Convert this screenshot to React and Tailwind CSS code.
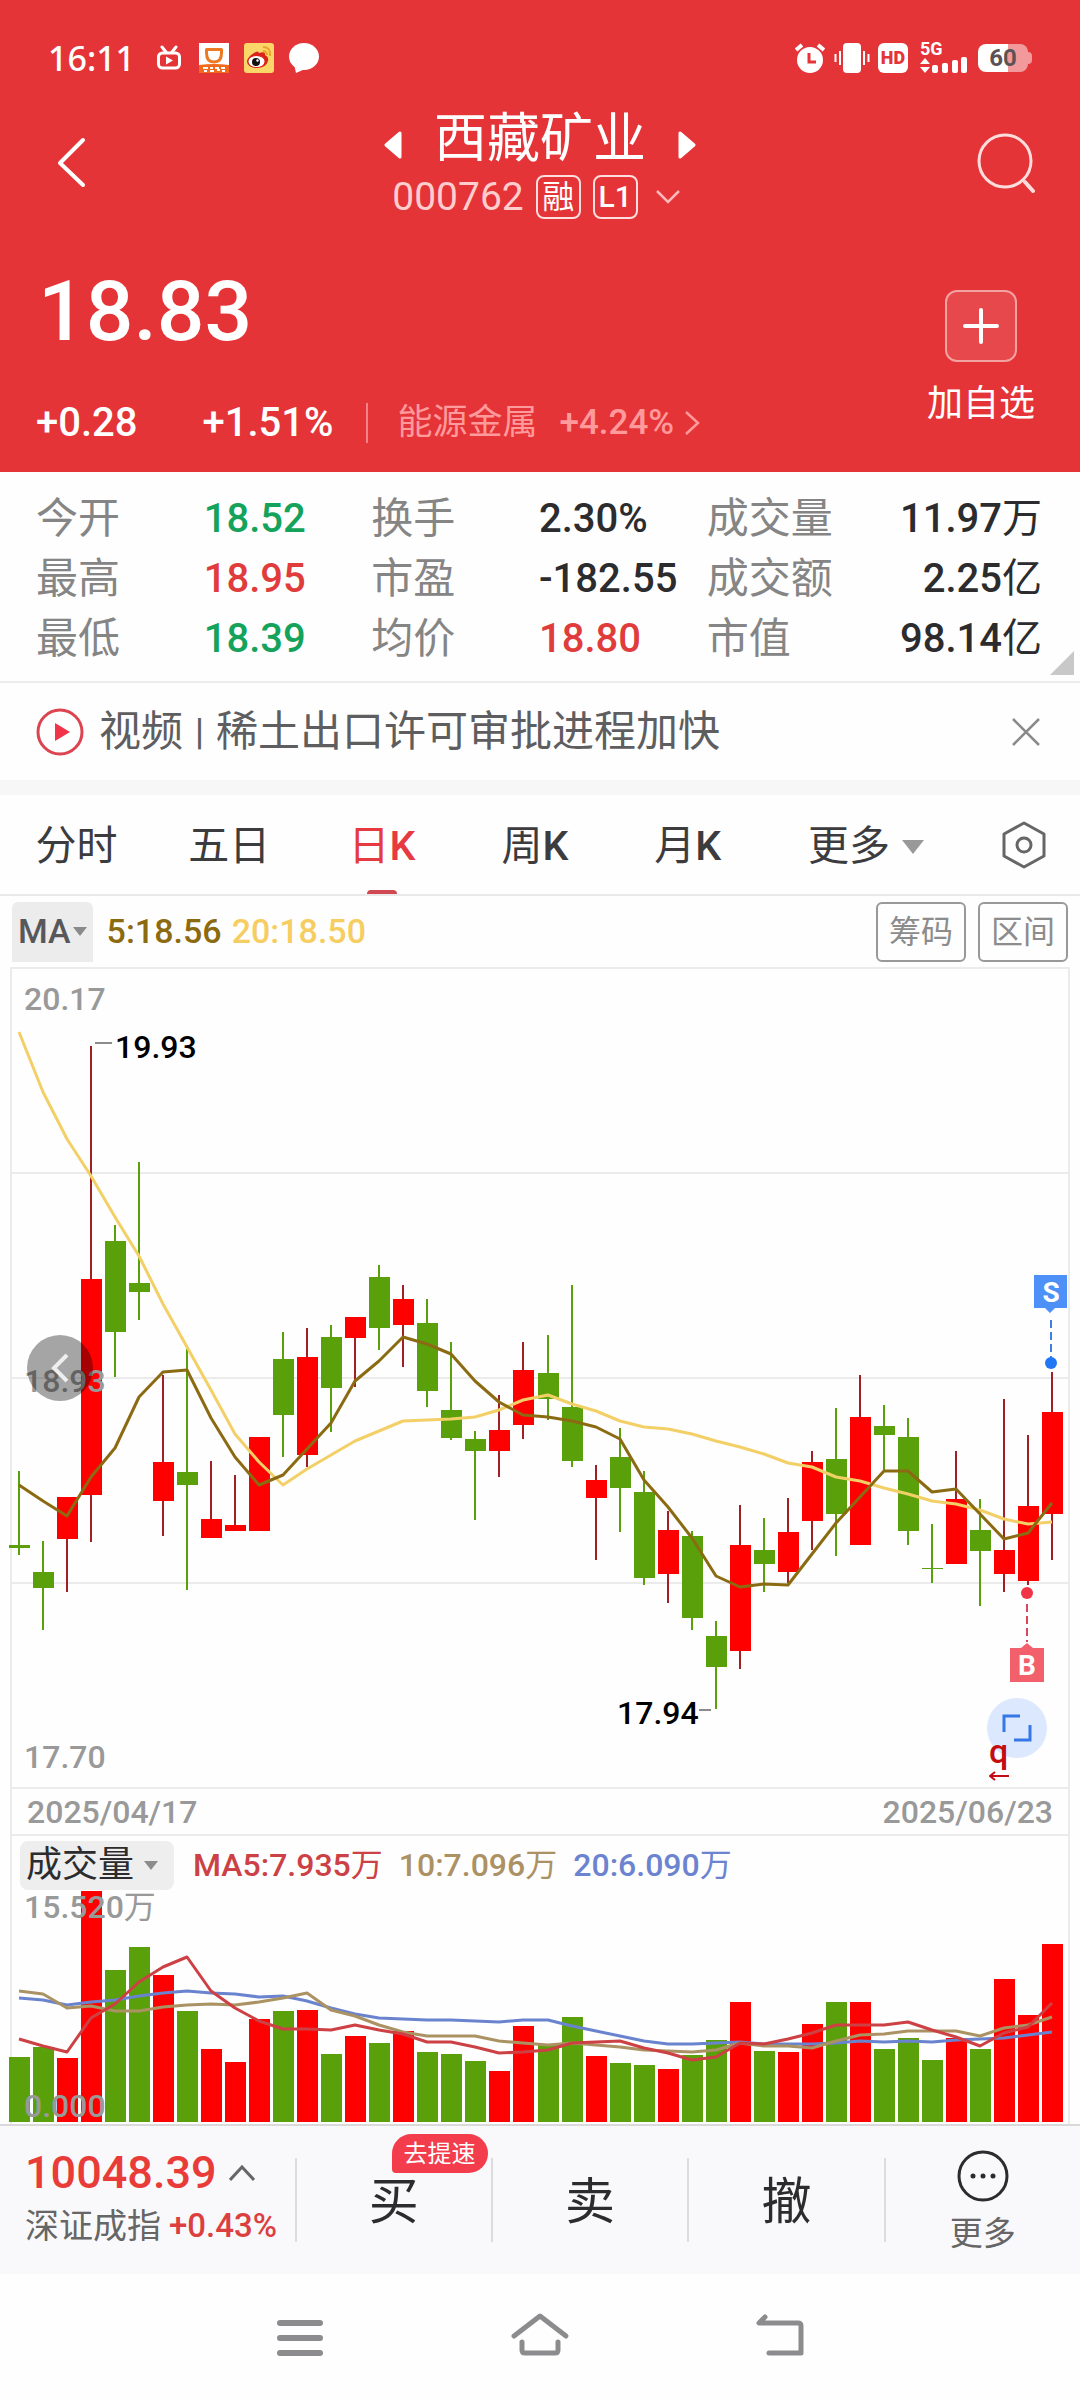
import React from "react";

const UP = "#ff0000";
const DOWN = "#5aa00a";

// [direction, high, body top, body bottom, low, volume] in plot units
const DAYS = [
  ["d", 504, 578, 581, 588, 65], ["d", 574, 605, 621, 663, 75], ["u", 530, 530, 572, 625, 64],
  ["u", 79, 312, 528, 575, 231], ["d", 258, 274, 365, 410, 152], ["d", 195, 316, 325, 353, 175],
  ["u", 408, 495, 534, 569, 147], ["d", 382, 505, 518, 623, 111], ["u", 494, 552, 571, 571, 73],
  ["u", 508, 558, 564, 564, 60], ["u", 470, 470, 564, 564, 103], ["d", 365, 392, 448, 490, 111],
  ["u", 361, 390, 488, 500, 112], ["d", 358, 370, 421, 465, 68], ["u", 350, 350, 371, 420, 86],
  ["d", 298, 310, 361, 383, 79], ["u", 318, 332, 358, 400, 91], ["d", 332, 356, 424, 440, 70],
  ["d", 375, 443, 471, 473, 68], ["d", 464, 472, 484, 553, 61], ["u", 428, 463, 484, 510, 51],
  ["u", 375, 403, 458, 472, 96], ["d", 368, 406, 432, 453, 77], ["d", 318, 440, 494, 500, 105],
  ["u", 498, 513, 531, 593, 66], ["d", 461, 490, 521, 565, 59], ["d", 504, 525, 611, 618, 57],
  ["u", 544, 563, 607, 636, 53], ["d", 564, 569, 651, 663, 67], ["d", 654, 669, 700, 742, 82],
  ["u", 538, 578, 684, 702, 120], ["d", 551, 583, 597, 625, 71], ["u", 531, 565, 605, 616, 70],
  ["u", 484, 495, 554, 583, 98], ["d", 441, 492, 547, 589, 120], ["u", 408, 450, 578, 578, 120],
  ["d", 438, 459, 468, 504, 73], ["d", 451, 470, 564, 578, 84], ["d", 557, 601, 602, 616, 62],
  ["u", 484, 532, 597, 597, 84], ["d", 532, 563, 584, 639, 73], ["u", 432, 583, 607, 625, 143],
  ["u", 468, 539, 614, 618, 107], ["u", 405, 445, 547, 593, 178],
];

const MA20 = [65, 125, 172, 209, 250, 289, 337, 380, 423, 467, 495, 518, 502, 488, 474, 464, 454, 453, 452, 450, 443, 433, 428, 437, 444, 454, 460, 462, 467, 474, 480, 487, 496, 500, 510, 514, 521, 527, 534, 537, 543, 552, 557, 555];
const MA5 = [518, 534, 549, 510, 481, 430, 405, 403, 451, 490, 518, 508, 482, 456, 414, 394, 370, 377, 387, 414, 435, 448, 450, 454, 460, 472, 513, 540, 571, 609, 620, 617, 618, 587, 556, 530, 504, 504, 525, 522, 547, 572, 566, 536];
const VOL5 = [149, 156, 162, 128, 114, 92, 77, 67, 101, 118, 131, 139, 139, 140, 135, 140, 144, 152, 152, 157, 163, 162, 160, 153, 152, 151, 158, 163, 170, 167, 153, 154, 149, 143, 135, 135, 135, 132, 140, 147, 156, 143, 137, 113];
const VOL10 = [101, 104, 118, 116, 121, 121, 117, 115, 114, 115, 112, 108, 103, 120, 126, 135, 142, 146, 146, 146, 151, 153, 155, 153, 155, 157, 160, 161, 162, 160, 153, 156, 156, 158, 151, 145, 144, 141, 141, 141, 146, 138, 135, 127];
const VOL20 = [108, 110, 115, 112, 110, 106, 103, 101, 103, 104, 107, 106, 111, 118, 124, 128, 129, 130, 130, 131, 132, 130, 130, 136, 141, 146, 151, 154, 154, 153, 152, 154, 154, 154, 153, 151, 152, 151, 152, 150, 149, 148, 145, 142];

const dayX = (i) => 8 + Math.round((i * 1033) / 43);
const points = (ys) => ys.map((y, i) => `${dayX(i)},${y}`).join(" ");

function Line({ ys, color }) {
  return <polyline points={points(ys)} fill="none" stroke={color} strokeWidth="3" strokeLinejoin="round" />;
}

function StatusBar() {
  return (
    <div className="flex h-11 items-center justify-between pl-12 pr-12 text-white">
      <div className="flex items-center">
        <span className="w-[109px] text-[34px] font-medium leading-11 font-['Noto_Sans']">16:11</span>
        <svg width="24" height="26" viewBox="0 0 24 26" fill="none" stroke="#fff">
          <path d="M5 2l4 5M19 2l-4 5" strokeWidth="3" strokeLinecap="round" />
          <rect x="1.5" y="8" width="21" height="15" rx="4" strokeWidth="3" />
          <path d="M9 11.500l7 4-7 4z" fill="#fff" stroke="none" />
        </svg>
        <svg className="ml-[18px]" width="30" height="30" viewBox="0 0 30 30">
          <path d="M0 0h30v30H0z" fill="#fff" />
          <path d="M0 22q15-2 30 0v8H0z" fill="#f26a1c" />
          <path d="M7.500 6.500h15v3.500q0 9-7.500 9t-7.500-9z" fill="none" stroke="#ec7a22" strokeWidth="3" strokeLinejoin="round" />
          <path d="M4 25h5M11 25h3M16 25h4M22 25h4M5 28h3M11 28h4M18 27h3M23 28h3" stroke="#fff" strokeWidth="2" />
        </svg>
        <svg className="ml-[15px]" width="30" height="30" viewBox="0 0 30 30">
          <rect width="30" height="30" rx="3" fill="#fbd76a" />
          <path d="M3 19q0-5 7-9 4-3 5 0 7-2 6 2 4 2 3 6-2 7-11 7-9 0-10-6z" fill="#dc2219" />
          <ellipse cx="12.500" cy="18.500" rx="8" ry="5.500" fill="#fff" />
          <circle cx="12" cy="19" r="4" fill="#111" />
          <circle cx="13.500" cy="17.500" r="1.200" fill="#fff" />
          <path d="M19 4q8 0 7 9M19 8q4 0 4 4" fill="none" stroke="#e8a52a" strokeWidth="2" />
        </svg>
        <svg className="ml-[15px]" width="30" height="30" viewBox="0 0 30 30" fill="#fff">
          <ellipse cx="15" cy="13.500" rx="15" ry="13.500" />
          <path d="M5 21l2 9 9-4z" />
        </svg>
      </div>
      <div className="flex items-center">
        <svg width="30" height="30" viewBox="0 0 30 30">
          <circle cx="15" cy="17" r="13" fill="#fff" />
          <path d="M1 7l6-5M29 7l-6-5" stroke="#fff" strokeWidth="4" />
          <path d="M14 10v9h7" fill="none" stroke="#e43437" strokeWidth="3" />
        </svg>
        <svg className="ml-[9px]" width="36" height="30" viewBox="0 0 36 30">
          <rect x="9" width="18" height="30" rx="4" fill="#fff" />
          <path d="M1.500 11v8M6 8v14M30 8v14M34.500 11v8" stroke="#fff" strokeWidth="2" />
        </svg>
        <span className="ml-2 flex h-[30px] w-[30px] items-center justify-center rounded-md bg-white text-[18px] font-black leading-none text-[#e43437] font-['Roboto']">HD</span>
        <div className="relative ml-3 h-[30px] w-12">
          <span className="absolute -top-1 left-0 text-[18px] font-bold leading-5 font-['Roboto']">5G</span>
          <svg width="48" height="30" viewBox="0 0 48 30" fill="#fff">
            <path d="M0 21l5-6 5 6zM0 24h10l-5 6z" />
            <g><rect x="12" y="22" width="6" height="8" rx="2" /><rect x="22" y="20" width="6" height="10" rx="2" /><rect x="32" y="17" width="6" height="13" rx="2" /><rect x="41" y="14" width="6" height="16" rx="2" /></g>
          </svg>
        </div>
        <span className="ml-2.5 flex h-7 w-[50px] items-center justify-center rounded-lg bg-linear-to-r from-white from-60% to-[#f29a9b] to-60% text-2xl font-bold leading-none text-[#5a5254] font-['Roboto']">60</span>
        <span className="h-3 w-1 rounded-r bg-[#f29a9b]" />
      </div>
    </div>
  );
}

function Header() {
  return (
    <header className="bg-[#e43437] pt-9 pb-[27px] text-white">
      <StatusBar />
      <div className="mt-[27px] flex items-center justify-between pl-10 pr-11">
        <button aria-label="返回" className="w-24 pl-4">
          <svg width="30" height="52" viewBox="0 0 30 52" fill="none" stroke="#fff" strokeWidth="4" strokeLinecap="round" strokeLinejoin="round">
            <path d="M27 3L4 26l23 22" />
          </svg>
        </button>
        <div className="flex flex-col items-center gap-[9px] pt-1">
          <div className="flex items-center gap-8 pl-1">
            <button aria-label="上一只" className="pt-3">
              <svg width="18" height="28" viewBox="0 0 18 28"><path d="M16 2v24L2 14z" fill="#fff" stroke="#fff" strokeWidth="3" strokeLinejoin="round" /></svg>
            </button>
            <h1 className="text-[53px] leading-14">西藏矿业</h1>
            <button aria-label="下一只" className="pt-3">
              <svg width="18" height="28" viewBox="0 0 18 28"><path d="M2 2v24l14-12z" fill="#fff" stroke="#fff" strokeWidth="3" strokeLinejoin="round" /></svg>
            </button>
          </div>
          <div className="flex h-[42px] items-center pr-1">
            <span className="text-[39px] text-[#ffcdcd]">000762</span>
            <span className="ml-3 flex h-11 w-[45px] items-center justify-center rounded-lg border-2 border-[#ffdede] text-[32px] leading-none">融</span>
            <span className="ml-3 flex h-11 w-[45px] items-center justify-center rounded-lg border-2 border-[#ffdede] text-[30px] font-medium leading-none">L1</span>
            <svg className="ml-[18px]" width="24" height="14" viewBox="0 0 24 14" fill="none" stroke="#ffb9b9" strokeWidth="2.500"><path d="M1 1l11 11L23 1" /></svg>
          </div>
        </div>
        <button aria-label="搜索" className="flex w-24 justify-end">
          <svg width="60" height="60" viewBox="0 0 60 60" fill="none" stroke="#ffdcdc" strokeWidth="3" strokeLinecap="round">
            <circle cx="29" cy="28" r="26" /><path d="M49 49l8 9" strokeWidth="4" />
          </svg>
        </button>
      </div>
      <div className="mt-[49px] flex items-start justify-between pl-9 pr-[45px]">
        <div>
          <div className="pl-0.5 text-[84px] font-medium leading-[90px]">18.83</div>
          <div className="mt-11 flex h-11 items-center text-[40px] font-medium">
            <span>+0.28</span>
            <span className="ml-[65px]">+1.51%</span>
            <span className="ml-[32px] h-10 w-0.5 bg-[#f08385]" />
            <a href="#sector" className="ml-[30px] flex items-center text-[35px] text-[#ff9a9c]">
              <span className="font-normal">能源金属</span>
              <span className="ml-[22px]">+4.24%</span>
              <svg className="ml-2.5" width="16" height="24" viewBox="0 0 16 24" fill="none" stroke="#ff9a9c" strokeWidth="2.500"><path d="M2 1l12 11L2 23" /></svg>
            </a>
          </div>
        </div>
        <button className="mt-[23px] flex flex-col items-center gap-5">
          <span className="flex h-[72px] w-[72px] items-center justify-center rounded-xl border-2 border-[#f3a2a2] bg-white/10">
            <svg width="36" height="36" viewBox="0 0 36 36" stroke="#fff" strokeWidth="4" strokeLinecap="round"><path d="M18 2v32M2 18h32" /></svg>
          </span>
          <span className="text-[36px] leading-11">加自选</span>
        </button>
      </div>
    </header>
  );
}

const STATS = [
  [["今开", "18.52", "g"], ["最高", "18.95", "r"], ["最低", "18.39", "g"]],
  [["换手", "2.30%"], ["市盈", "-182.55"], ["均价", "18.80", "r"]],
  [["成交量", "11.97万"], ["成交额", "2.25亿"], ["市值", "98.14亿"]],
];
const TONES = { g: "text-[#15a35c]", r: "text-[#e03c3c]" };

function Stats() {
  return (
    <section className="relative border-b-2 border-[#ececee] pt-[17px] pb-3 pl-9 pr-[38px]">
      <div className="grid grid-cols-3">
        {STATS.map((group, g) => (
          <dl key={g}>
            {group.map(([label, value, tone]) => (
              <div key={label} className={g === 2 ? "flex justify-between" : "grid grid-cols-2"}>
                <dt className="text-[42px] leading-15 text-[#858585]">{label}</dt>
                <dd className={`whitespace-nowrap text-[40px] font-medium leading-15 ${TONES[tone] || "text-[#2c2c2e]"}`}>
                  {value.replace(/[万亿]/, "")}
                  <span className="font-normal">{value.match(/[万亿]/)}</span>
                </dd>
              </div>
            ))}
          </dl>
        ))}
      </div>
      <svg className="absolute right-1.5 bottom-1.5" width="24" height="24" viewBox="0 0 24 24"><path d="M24 0v24H0z" fill="#c8c8c8" /></svg>
    </section>
  );
}

function News() {
  return (
    <section className="flex items-center border-b-[15px] border-[#f7f7f8] pt-6 pb-[23px] pl-9 pr-10">
      <svg width="48" height="48" viewBox="0 0 48 48">
        <circle cx="24" cy="24" r="22" fill="none" stroke="#dc4450" strokeWidth="3" />
        <path d="M19 15l15 9-15 9z" fill="#f2344a" />
      </svg>
      <a href="#news" className="ml-[15px] flex items-center text-[42px] leading-[50px] text-[#5e5e60]">
        视频<b className="mx-3 text-[36px] font-medium">|</b>稀土出口许可审批进程加快
      </a>
      <button aria-label="关闭" className="ml-auto">
        <svg width="28" height="28" viewBox="0 0 28 28" stroke="#8a8a8a" strokeWidth="2.500"><path d="M1 1l26 26M27 1L1 27" /></svg>
      </button>
    </section>
  );
}

function Tabs() {
  return (
    <nav className="grid h-[101px] grid-cols-[15fr_15fr_15fr_15fr_15fr_20fr_11fr] border-b-2 border-[#e9e9e9] text-[41px] text-[#3c3c3e]">
      {["分时", "五日", "日K", "周K", "月K"].map((t) =>
        t === "日K" ? (
          <button key={t} aria-current="page" className="relative pt-1 text-[#e63a40]">
            日<span className="font-medium">K</span>
            <span className="absolute bottom-0 left-1/2 h-1 w-[30px] -translate-x-1/2 rounded-t-sm bg-[#cf4852]" />
          </button>
        ) : (
          <button key={t} className="pt-1">{t[0]}<span className={t[1] === "K" ? "font-medium" : "font-normal"}>{t[1]}</span></button>
        )
      )}
      <button className="flex items-center justify-center gap-3 pt-1">
        更多
        <svg width="22" height="14" viewBox="0 0 22 14"><path d="M0 0h22L11 14z" fill="#999" /></svg>
      </button>
      <button aria-label="设置" className="flex items-center justify-center">
        <svg width="46" height="48" viewBox="0 0 46 48" fill="none" stroke="#666" strokeWidth="3" strokeLinejoin="round">
          <path d="M23 2l20 11v22L23 46 3 35V13z" /><circle cx="23" cy="24" r="7" />
        </svg>
      </button>
    </nav>
  );
}

function MaBar() {
  return (
    <div className="flex h-[71px] items-center px-3 text-[34px] font-medium">
      <button className="flex h-[60px] items-center rounded-t-md bg-[#ececec] px-1.5 text-[#58585a]">
        MA
        <svg className="ml-0.5" width="14" height="9" viewBox="0 0 14 9"><path d="M0 0h14L7 9z" fill="#8a8a8a" /></svg>
      </button>
      <span className="ml-3.5 text-[#8b6a10]">5:18.56</span>
      <span className="ml-2.5 text-[#f6cd60]">20:18.50</span>
      <div className="ml-auto flex gap-3 text-[32px] font-normal text-[#8c8c8c]">
        <button className="h-[60px] w-[90px] rounded-md border-2 border-[#999]">筹码</button>
        <button className="h-[60px] w-[90px] rounded-md border-2 border-[#999]">区间</button>
      </div>
    </div>
  );
}

function PriceChart() {
  return (
    <div className="relative border-y-2 border-[#ebebeb]">
      <svg className="block h-auto w-full overflow-visible" viewBox="1 2 1056 818" fontFamily="Roboto" fontSize="32">
        <path d="M1 206h1056M1 411h1056M1 616h1056" stroke="#ebebeb" strokeWidth="2" />
        {DAYS.map(([dir, high, top, bottom, low], i) => (
          <g key={i} fill={dir === "u" ? UP : DOWN}>
            <path d={`M${dayX(i)} ${high}V${low}`} stroke={dir === "u" ? "#a02024" : DOWN} strokeWidth="2" />
            <rect x={dayX(i) - 10} y={top} width="21" height={bottom - top} />
          </g>
        ))}
        <Line ys={MA20} color="#f3d067" />
        <Line ys={MA5} color="#8b6b12" />
        <g fontWeight="500" fill="#999">
          <text x="13" y="43">20.17</text>
          <text x="13" y="425">18.93</text>
          <text x="13" y="801">17.70</text>
          <g fill="#000">
            <text x="104" y="91">19.93</text>
            <text x="606" y="757">17.94</text>
          </g>
        </g>
        <path d="M84 76h17M688 743h12" stroke="#8c8c8c" strokeWidth="2" />
        <path d="M1023 308h33v33h-12l-5 5-5-5h-11z" fill="#4d90f8" />
        <text x="1040" y="335" fontSize="28" fontWeight="700" textAnchor="middle" fill="#fff">S</text>
        <path d="M1040 353v38" stroke="#3f7fe0" strokeWidth="2" strokeDasharray="8 4" />
        <circle cx="1040" cy="396" r="6" fill="#2177f3" />
        <circle cx="1016" cy="626" r="6" fill="#f03446" />
        <path d="M1016 637v38" stroke="#d8465a" strokeWidth="2" strokeDasharray="8 4" />
        <path d="M999 681h11l6-5 6 5h11v34h-34z" fill="#f2606c" />
        <text x="1016" y="708" fontSize="28" fontWeight="700" textAnchor="middle" fill="#fff">B</text>
      </svg>
      <button aria-label="向左" className="absolute top-[366px] left-[15px] flex h-[66px] w-[66px] items-center justify-center rounded-full bg-black/35">
        <svg width="18" height="30" viewBox="0 0 18 30" fill="none" stroke="#eee" strokeWidth="4"><path d="M16 2L3 15l13 13" /></svg>
      </button>
      <div className="absolute right-[21px] bottom-[29px] h-15 w-15">
        <button aria-label="全屏" className="flex h-15 w-15 items-center justify-center rounded-full bg-[#dbe8fd]">
          <svg width="30" height="30" viewBox="0 0 30 30" fill="none" stroke="#3577e6" strokeWidth="3"><path d="M2 19V3h16M28 12v15H12" /></svg>
        </button>
        <span className="absolute top-[37px] left-0.5 text-[34px] font-medium leading-8 text-[#c30d12]">q</span>
        <svg className="absolute top-[73px] left-0.5" width="20" height="10" viewBox="0 0 20 10" fill="none" stroke="#c30d12" strokeWidth="2"><path d="M20 5H1M6 1L1 5l5 4" /></svg>
      </div>
    </div>
  );
}

function VolumeChart() {
  return (
    <div>
      <div className="flex h-[54px] items-center pt-1 pl-2 text-[32px] font-medium">
        <button className="flex h-[49px] items-center rounded-lg bg-[#eeeeee] px-1.5 text-[36px] font-normal text-[#2c2c2e]">
          成交量
          <svg className="mx-2.5" width="14" height="9" viewBox="0 0 14 9"><path d="M0 0h14L7 9z" fill="#8c8c8c" /></svg>
        </button>
        <span className="ml-[19px] text-[#cc4145]">MA5:7.935<span className="font-normal">万</span></span>
        <span className="ml-4 text-[#ac9164]">10:7.096<span className="font-normal">万</span></span>
        <span className="ml-4 text-[#6c84cf]">20:6.090<span className="font-normal">万</span></span>
      </div>
      <svg className="block h-auto w-full overflow-visible" viewBox="1 0 1056 234" fontFamily="Roboto, 'Noto Sans CJK SC', sans-serif" fontSize="32" fill="#999">
        {DAYS.map(([dir, , , , , v], i) => (
          <rect key={i} x={dayX(i) - 10} y={232 - v} width="21" height={v} fill={dir === "u" ? UP : DOWN} />
        ))}
        <Line ys={VOL20} color="#6a83cf" />
        <Line ys={VOL10} color="#ab9263" />
        <Line ys={VOL5} color="#cd4044" />
        <text x="13" y="28" fontWeight="500">15.520<tspan fontWeight="400">万</tspan></text>
        <text x="13" y="227" fontWeight="500">0.000</text>
      </svg>
    </div>
  );
}

function TradeBar() {
  return (
    <footer className="grid h-[150px] grid-cols-[3fr_2fr_2fr_2fr_2fr] items-start border-t-2 border-[#d9d9dc] bg-[#f9f9fb] pt-[22px]">
      <button className="flex h-[112px] flex-col pl-[25px] text-left whitespace-nowrap">
        <span className="flex items-center gap-3 text-[45px] font-medium leading-[50px] text-[#e93c38]">
          10048.39
          <svg width="26" height="16" viewBox="0 0 26 16" fill="none" stroke="#666" strokeWidth="3"><path d="M1 15L13 2l12 13" /></svg>
        </span>
        <span className="flex items-center text-[34px] leading-14 text-[#666]">
          深证成指<span className="ml-2 text-[33px] font-medium text-[#dc3f3f]">+0.43%</span>
        </span>
      </button>
      {["买", "卖", "撤"].map((t) => (
        <div key={t} className="relative mt-2.5 border-l-2 border-[#dcdcdf]">
          <button className="h-[84px] w-full pt-1 text-[50px] leading-[80px] text-[#2c2c2e]">{t}</button>
          {t === "买" && (
            <span className="absolute -top-[24px] left-[95px] flex h-[39px] w-24 items-center justify-center rounded-[20px] rounded-bl-sm bg-[#f33c4c] text-2xl leading-none text-white">去提速</span>
          )}
        </div>
      ))}
      <div className="mt-2.5 h-[84px] border-l-2 border-[#dcdcdf]">
        <button className="-mt-2.5 flex w-full flex-col items-center text-[33px] leading-10 text-[#666]">
          <svg className="mt-0.5 mb-3" width="52" height="52" viewBox="0 0 52 52">
            <circle cx="26" cy="26" r="24" fill="none" stroke="#2c2c2e" strokeWidth="3" />
            <g fill="#2c2c2e"><circle cx="16" cy="26" r="2.500" /><circle cx="26" cy="26" r="2.500" /><circle cx="36" cy="26" r="2.500" /></g>
          </svg>
          更多
        </button>
      </div>
    </footer>
  );
}

function SystemNav() {
  return (
    <nav className="flex h-[127px] items-center justify-center gap-[180px] text-[#8c8c8e]">
      <button aria-label="最近任务">
        <svg width="60" height="52" viewBox="0 0 60 52" stroke="currentColor" strokeWidth="6" strokeLinecap="round"><path d="M10 11h40M10 26h40M10 41h40" /></svg>
      </button>
      <button aria-label="主页">
        <svg width="60" height="52" viewBox="0 0 60 52" fill="none" stroke="currentColor" strokeWidth="5" strokeLinecap="round" strokeLinejoin="round"><path d="M4 24L30 4l26 20M12 30v8q0 3 3 3h30q3 0 3-3v-8" /></svg>
      </button>
      <button aria-label="返回上级">
        <svg width="60" height="52" viewBox="0 0 60 52" fill="none" stroke="currentColor" strokeWidth="5" strokeLinecap="round" strokeLinejoin="round"><path d="M15 5l-6 6h39q3 0 3 3v27H19" /></svg>
      </button>
    </nav>
  );
}

export default function App() {
  return (
    <div className="min-h-screen bg-[#fefefe] font-[Roboto,'Noto_Sans_CJK_SC',sans-serif]">
      <Header />
      <Stats />
      <News />
      <Tabs />
      <MaBar />
      <main className="mx-[10px] border-x-2 border-[#ebebeb]">
        <PriceChart />
        <div className="flex h-[47px] items-center justify-between border-b-2 border-[#ebebeb] px-[15px] text-[32px] font-medium text-[#999]">
          <span>2025/04/17</span>
          <span>2025/06/23</span>
        </div>
        <VolumeChart />
      </main>
      <TradeBar />
      <SystemNav />
    </div>
  );
}
